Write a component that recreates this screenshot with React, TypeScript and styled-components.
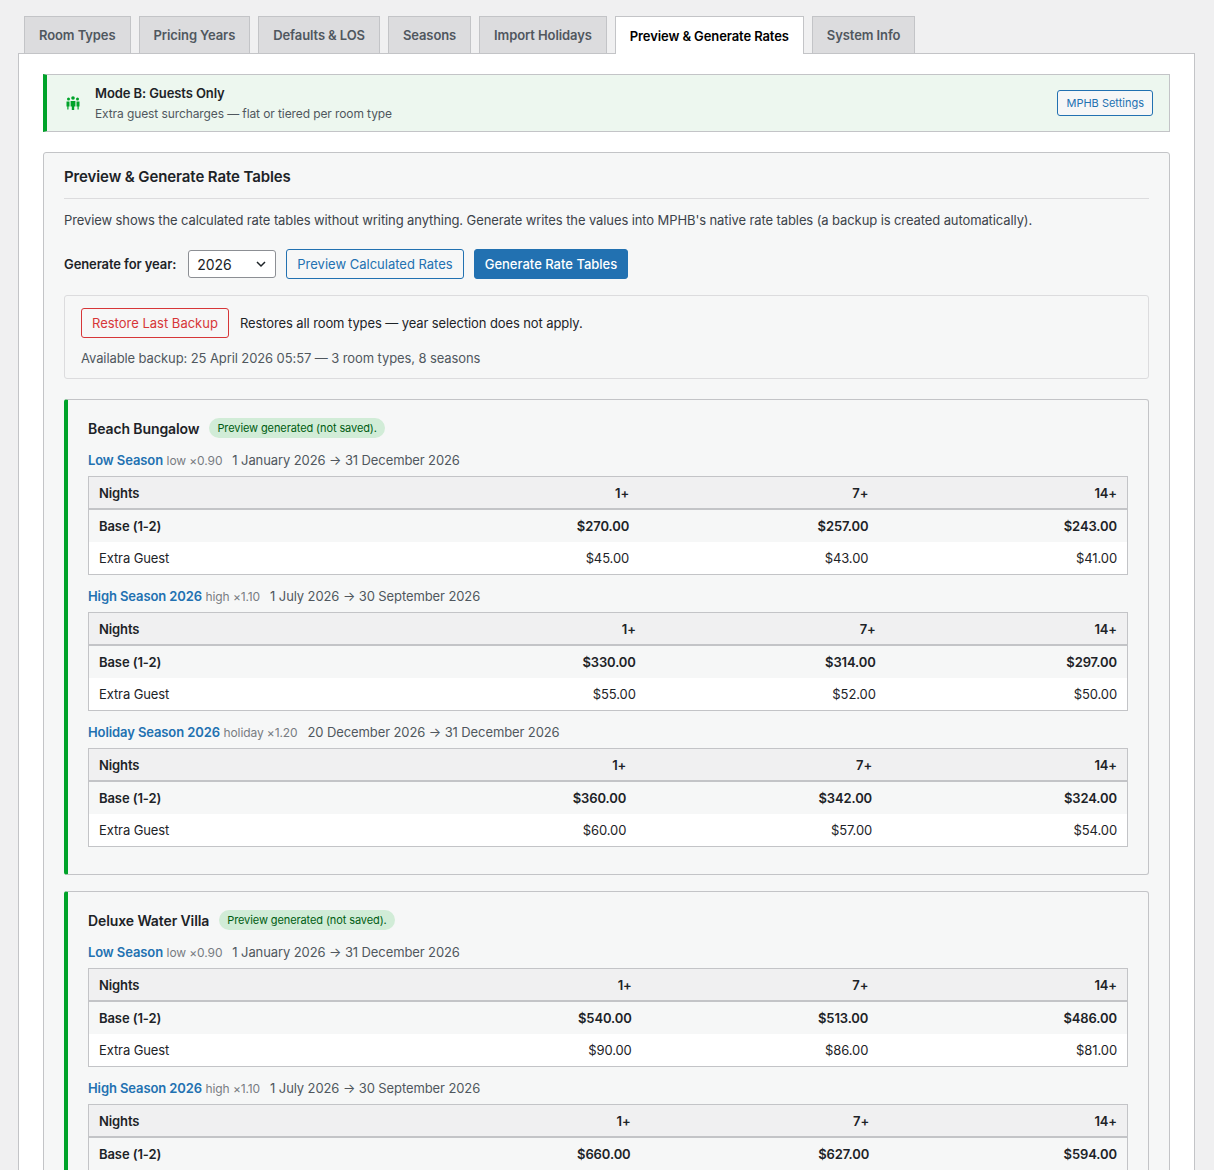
import React from "react";
import styled, { createGlobalStyle } from "styled-components";

const G = createGlobalStyle`
  body { margin: 0; background: #f0f0f1; font-family: Inter, "Noto Sans", sans-serif; color: #1d2327; font-size: 13px; letter-spacing: -0.1px; }
`;
const Wrap = styled.div`padding: 16px 19px 0 18px;`;
const Tabs = styled.div`display: flex; gap: 8px; padding-left: 6px;`;
const Tab = styled.div<{ $active?: boolean }>`
  padding: 0 14px; display: flex; align-items: center; font-weight: 600; font-size: 13px;
  border: 1px solid #c3c4c7; border-bottom: none; background: ${p => (p.$active ? "#fff" : "#dcdcde")};
  color: ${p => (p.$active ? "#000" : "#50575e")}; margin-bottom: -1px; position: relative; z-index: 1;
  height: ${p => (p.$active ? "37px" : "36px")};
`;
const Panel = styled.div`background: #fff; border: 1px solid #c3c4c7; padding: 20px 24px; display: flex; flex-direction: column; gap: 20px; min-height: 1100px;`;
const Notice = styled.div`display: flex; align-items: center; background: #edf7ef; border: 1px solid #c3c4c7; border-left: 4px solid #00a32a; padding: 10px 16px 10px 18px; gap: 14px;`;
const NText = styled.div`flex: 1; display: flex; flex-direction: column; gap: 5px; strong{font-size:13px;font-weight:600} span{font-size:12px;color:#50575e}`;
const SmallBtn = styled.button`font: inherit; font-size: 11px; color: #2271b1; border: 1px solid #2271b1; background: #f6f7f7; border-radius: 3px; padding: 5px 8px;`;
const Card = styled.div`background: #f6f7f7; border: 1px solid #c3c4c7; border-radius: 3px; padding: 14px 20px 20px; display: flex; flex-direction: column;`;
const H2 = styled.div`font-size: 15px; font-weight: 600; padding-bottom: 12px; border-bottom: 1px solid #dcdcde;`;
const Desc = styled.p`margin: 13px 0 0; color: #3c434a;`;
const Row = styled.div`display: flex; align-items: center; gap: 10px; margin-top: 21px; label{font-weight:600;margin-right:2px}`;
const Select = styled.div`width: 88px; height: 28px; box-sizing: border-box; border: 1px solid #8c8f94; border-radius: 3px; background: #fff; display: flex; align-items: center; justify-content: space-between; padding: 0 8px; font-size: 14px;`;
const Btn = styled.button<{ $primary?: boolean; $danger?: boolean }>`
  font: inherit; font-size: 13px; height: 30px; padding: 0 10px; border-radius: 3px;
  border: 1px solid ${p => (p.$danger ? "#d63638" : "#2271b1")};
  background: ${p => (p.$primary ? "#2271b1" : "#f6f7f7")};
  color: ${p => (p.$primary ? "#fff" : p.$danger ? "#d63638" : "#2271b1")};
  font-weight: ${p => (p.$primary ? 500 : 400)};
`;
const Backup = styled.div`margin-top: 16px; background: #f6f7f7; border: 1px solid #dcdcde; border-radius: 3px; padding: 12px 16px; display: flex; flex-direction: column; gap: 12px;`;
const BRow = styled.div`display: flex; align-items: center; gap: 11px;`;
const Muted = styled.div`color: #50575e;`;
const Room = styled.div`margin-top: 20px; & + & { margin-top: 16px; } background: #f6f7f7; border: 1px solid #c3c4c7; border-left: 4px solid #00a32a; border-radius: 3px; padding: 18px 20px 27px; display: flex; flex-direction: column;`;
const RoomHead = styled.div`display: flex; align-items: center; gap: 10px; font-size: 14px; font-weight: 600;`;
const Badge = styled.span`background: #d1ecd7; color: #005c12; font-size: 11px; font-weight: 400; padding: 3px 8px; border-radius: 10px;`;
const Season = styled.div`margin: 14px 0 8px; font-size: 13px; color: #50575e; b{color:#2271b1;font-weight:600} i{font-style:normal;color:#787c82;font-size:12px;margin-right:10px}`;
const SeasonNext = styled(Season)`margin-top: 13px;`;
const Table = styled.table`width: 100%; border-collapse: collapse; border: 1px solid #c3c4c7; background: #fff; font-size: 13px;
  th{background:#f0f0f1;font-weight:600;text-align:right;padding:0 10px;height:31px;border-bottom:2px solid #c3c4c7}
  th:first-child,td:first-child{text-align:left}
  td{padding:0 10px;height:32px;text-align:right}
  tr.base td{background:#f6f7f7;font-weight:600}
`;

const Icon = () => (
  <svg width="16" height="16" viewBox="0 0 16 16" fill="#00a32a">
    <circle cx="8" cy="3" r="1.8" /><circle cx="3.5" cy="4" r="1.5" /><circle cx="12.5" cy="4" r="1.5" />
    <path d="M5.6 6h4.8v5.5H9.2V15H6.8v-3.5H5.6z" /><path d="M1.5 6.5h3v5h-1v3h-1.2v-3h-0.8z" /><path d="M11.5 6.5h3v5h-.8v3h-1.2v-3h-1z" />
  </svg>
);

type S = { name: string; tag: string; range: string; r: string[][] };
const rooms: { name: string; seasons: S[] }[] = [
  { name: "Beach Bungalow", seasons: [
    { name: "Low Season", tag: "low ×0.90", range: "1 January 2026 → 31 December 2026", r: [["$270.00","$257.00","$243.00"],["$45.00","$43.00","$41.00"]] },
    { name: "High Season 2026", tag: "high ×1.10", range: "1 July 2026 → 30 September 2026", r: [["$330.00","$314.00","$297.00"],["$55.00","$52.00","$50.00"]] },
    { name: "Holiday Season 2026", tag: "holiday ×1.20", range: "20 December 2026 → 31 December 2026", r: [["$360.00","$342.00","$324.00"],["$60.00","$57.00","$54.00"]] },
  ]},
  { name: "Deluxe Water Villa", seasons: [
    { name: "Low Season", tag: "low ×0.90", range: "1 January 2026 → 31 December 2026", r: [["$540.00","$513.00","$486.00"],["$90.00","$86.00","$81.00"]] },
    { name: "High Season 2026", tag: "high ×1.10", range: "1 July 2026 → 30 September 2026", r: [["$660.00","$627.00","$594.00"],["$110.00","$105.00","$99.00"]] },
  ]},
];

export default function App() {
  return (
    <Wrap>
      <G />
      <Tabs>
        {["Room Types","Pricing Years","Defaults & LOS","Seasons","Import Holidays","Preview & Generate Rates","System Info"].map(t => (
          <Tab key={t} $active={t.startsWith("Preview")}>{t}</Tab>
        ))}
      </Tabs>
      <Panel>
        <Notice>
          <Icon />
          <NText><strong>Mode B: Guests Only</strong><span>Extra guest surcharges — flat or tiered per room type</span></NText>
          <SmallBtn>MPHB Settings</SmallBtn>
        </Notice>
        <Card>
          <H2>Preview &amp; Generate Rate Tables</H2>
          <Desc>Preview shows the calculated rate tables without writing anything. Generate writes the values into MPHB's native rate tables (a backup is created automatically).</Desc>
          <Row>
            <label>Generate for year:</label>
            <Select>2026<svg width="12" height="12" viewBox="0 0 12 12"><path d="M2 4l4 4 4-4" stroke="#1d2327" strokeWidth="1.5" fill="none" /></svg></Select>
            <Btn>Preview Calculated Rates</Btn>
            <Btn $primary>Generate Rate Tables</Btn>
          </Row>
          <Backup>
            <BRow><Btn $danger>Restore Last Backup</Btn><span>Restores all room types — year selection does not apply.</span></BRow>
            <Muted>Available backup: 25 April 2026 05:57 — 3 room types, 8 seasons</Muted>
          </Backup>
          {rooms.map(room => (
            <Room key={room.name}>
              <RoomHead>{room.name}<Badge>Preview generated (not saved).</Badge></RoomHead>
              {room.seasons.map((s, i) => {
                const SH = i === 0 ? Season : SeasonNext;
                return (
                  <React.Fragment key={s.name}>
                    <SH><b>{s.name}</b> <i>{s.tag}</i>{s.range}</SH>
                    <Table>
                      <thead><tr><th>Nights</th><th>1+</th><th>7+</th><th>14+</th></tr></thead>
                      <tbody>
                        <tr className="base"><td>Base (1-2)</td>{s.r[0].map((v, j) => <td key={j}>{v}</td>)}</tr>
                        <tr><td>Extra Guest</td>{s.r[1].map((v, j) => <td key={j}>{v}</td>)}</tr>
                      </tbody>
                    </Table>
                  </React.Fragment>
                );
              })}
            </Room>
          ))}
        </Card>
      </Panel>
    </Wrap>
  );
}
